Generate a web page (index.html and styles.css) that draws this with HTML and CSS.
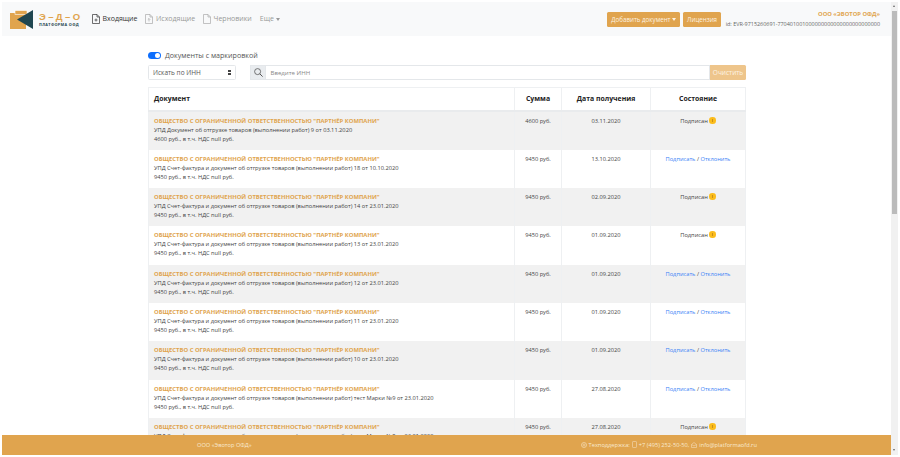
FILE: index.html
```html
<!DOCTYPE html>
<html lang="ru">
<head>
    <meta charset="UTF-8">
    <title>Э-Д-О Платформа ОФД</title>
    <link rel="stylesheet" href="styles.css">
</head>
<body>
    <div class="window">
        <div class="viewport">
            <nav class="navbar">
                <a class="brand">
                    <svg class="brand-mark" width="24" height="19" viewBox="0 0 24 19">
                        <rect x="0" y="3" width="16" height="16" fill="#e0a44e"/>
                        <rect x="5" y="0.5" width="12" height="4" fill="#e0a44e" stroke="#fff" stroke-width="0.6"/>
                        <path d="M23 0 L7 9.5 L23 19 Z" fill="#1f4650"/>
                    </svg>
                    <span class="brand-text">
                        <span class="brand-name">Э–Д–О</span>
                        <span class="brand-sub">ПЛАТФОРМА ОФД</span>
                    </span>
                </a>
                <ul class="nav-links">
                    <li class="nav-link active">
                        <svg class="doc-icon" width="8" height="10" viewBox="0 0 8 10"><path d="M.5.5H5L7.5 3V9.5H.5Z M5 .5V3H7.5 M4 4.5V7.5 M2.5 6H5.5"/></svg>
                        Входящие
                    </li>
                    <li class="nav-link">
                        <svg class="doc-icon" width="8" height="10" viewBox="0 0 8 10"><path d="M.5.5H5L7.5 3V9.5H.5Z M5 .5V3H7.5 M4 7.5V4.5 M2.8 5.7L4 4.5L5.2 5.7"/></svg>
                        Исходящие
                    </li>
                    <li class="nav-link">
                        <svg class="doc-icon" width="8" height="10" viewBox="0 0 8 10"><path d="M.5.5H5L7.5 3V9.5H.5Z M5 .5V3H7.5"/></svg>
                        Черновики
                    </li>
                    <li class="nav-link">Еще <span class="caret"></span></li>
                </ul>
                <div class="nav-actions">
                    <button class="btn">Добавить документ <span class="caret"></span></button>
                    <button class="btn">Лицензия</button>
                </div>
                <div class="org">
                    <div class="org-name">ООО «ЭВОТОР ОФД»</div>
                    <div class="org-id">id: EVR-9715260691-770401001000000000000000000000000</div>
                </div>
            </nav>

            <main class="content">
                <div class="switch-row">
                    <span class="switch"></span>
                    <span>Документы с маркировкой</span>
                </div>
                <div class="filters">
                    <div class="select">Искать по ИНН <span class="select-arrows"></span></div>
                    <div class="search">
                        <span class="search-icon">
                            <svg width="9" height="9" viewBox="0 0 9 9"><circle cx="3.6" cy="3.6" r="3" fill="none" stroke="#555" stroke-width="0.8"/><path d="M5.8 5.8L8.6 8.6" stroke="#555" stroke-width="1"/></svg>
                        </span>
                        <span class="search-input">Введите ИНН</span>
                        <button class="btn-clear">Очистить</button>
                    </div>
                </div>

                <table class="docs">
                    <thead>
                        <tr>
                            <th class="col-doc">Документ</th>
                            <th class="col-sum">Сумма</th>
                            <th class="col-date">Дата получения</th>
                            <th class="col-state">Состояние</th>
                        </tr>
                    </thead>
                    <tbody>
                        <tr>
                            <td><div class="doc-org">ОБЩЕСТВО С ОГРАНИЧЕННОЙ ОТВЕТСТВЕННОСТЬЮ "ПАРТНЁР КОМПАНИ"</div>УПД Документ об отгрузке товаров (выполнении работ) 9 от 03.11.2020<br>4600 руб., в т.ч. НДС null руб.</td>
                            <td class="center">4600 руб.</td>
                            <td class="center">03.11.2020</td>
                            <td class="center">Подписан <span class="dot"></span></td>
                        </tr>
                        <tr>
                            <td><div class="doc-org">ОБЩЕСТВО С ОГРАНИЧЕННОЙ ОТВЕТСТВЕННОСТЬЮ "ПАРТНЁР КОМПАНИ"</div>УПД Счет-фактура и документ об отгрузке товаров (выполнении работ) 18 от 10.10.2020<br>9450 руб., в т.ч. НДС null руб.</td>
                            <td class="center">9450 руб.</td>
                            <td class="center">13.10.2020</td>
                            <td class="center"><a>Подписать</a> / <a>Отклонить</a></td>
                        </tr>
                        <tr>
                            <td><div class="doc-org">ОБЩЕСТВО С ОГРАНИЧЕННОЙ ОТВЕТСТВЕННОСТЬЮ "ПАРТНЁР КОМПАНИ"</div>УПД Счет-фактура и документ об отгрузке товаров (выполнении работ) 14 от 23.01.2020<br>9450 руб., в т.ч. НДС null руб.</td>
                            <td class="center">9450 руб.</td>
                            <td class="center">02.09.2020</td>
                            <td class="center">Подписан <span class="dot"></span></td>
                        </tr>
                        <tr>
                            <td><div class="doc-org">ОБЩЕСТВО С ОГРАНИЧЕННОЙ ОТВЕТСТВЕННОСТЬЮ "ПАРТНЁР КОМПАНИ"</div>УПД Счет-фактура и документ об отгрузке товаров (выполнении работ) 13 от 23.01.2020<br>9450 руб., в т.ч. НДС null руб.</td>
                            <td class="center">9450 руб.</td>
                            <td class="center">01.09.2020</td>
                            <td class="center">Подписан <span class="dot"></span></td>
                        </tr>
                        <tr>
                            <td><div class="doc-org">ОБЩЕСТВО С ОГРАНИЧЕННОЙ ОТВЕТСТВЕННОСТЬЮ "ПАРТНЁР КОМПАНИ"</div>УПД Счет-фактура и документ об отгрузке товаров (выполнении работ) 12 от 23.01.2020<br>9450 руб., в т.ч. НДС null руб.</td>
                            <td class="center">9450 руб.</td>
                            <td class="center">01.09.2020</td>
                            <td class="center"><a>Подписать</a> / <a>Отклонить</a></td>
                        </tr>
                        <tr>
                            <td><div class="doc-org">ОБЩЕСТВО С ОГРАНИЧЕННОЙ ОТВЕТСТВЕННОСТЬЮ "ПАРТНЁР КОМПАНИ"</div>УПД Счет-фактура и документ об отгрузке товаров (выполнении работ) 11 от 23.01.2020<br>9450 руб., в т.ч. НДС null руб.</td>
                            <td class="center">9450 руб.</td>
                            <td class="center">01.09.2020</td>
                            <td class="center"><a>Подписать</a> / <a>Отклонить</a></td>
                        </tr>
                        <tr>
                            <td><div class="doc-org">ОБЩЕСТВО С ОГРАНИЧЕННОЙ ОТВЕТСТВЕННОСТЬЮ "ПАРТНЁР КОМПАНИ"</div>УПД Счет-фактура и документ об отгрузке товаров (выполнении работ) 10 от 23.01.2020<br>9450 руб., в т.ч. НДС null руб.</td>
                            <td class="center">9450 руб.</td>
                            <td class="center">01.09.2020</td>
                            <td class="center"><a>Подписать</a> / <a>Отклонить</a></td>
                        </tr>
                        <tr>
                            <td><div class="doc-org">ОБЩЕСТВО С ОГРАНИЧЕННОЙ ОТВЕТСТВЕННОСТЬЮ "ПАРТНЁР КОМПАНИ"</div>УПД Счет-фактура и документ об отгрузке товаров (выполнении работ) тест Марки №9 от 23.01.2020<br>9450 руб., в т.ч. НДС null руб.</td>
                            <td class="center">9450 руб.</td>
                            <td class="center">27.08.2020</td>
                            <td class="center"><a>Подписать</a> / <a>Отклонить</a></td>
                        </tr>
                        <tr>
                            <td><div class="doc-org">ОБЩЕСТВО С ОГРАНИЧЕННОЙ ОТВЕТСТВЕННОСТЬЮ "ПАРТНЁР КОМПАНИ"</div>УПД Счет-фактура и документ об отгрузке товаров (выполнении работ) тест Марки №8 от 23.01.2020<br>9450 руб., в т.ч. НДС null руб.</td>
                            <td class="center">9450 руб.</td>
                            <td class="center">27.08.2020</td>
                            <td class="center">Подписан <span class="dot"></span></td>
                        </tr>
                    </tbody>
                </table>
            </main>

            <footer class="footer">
                <span class="footer-org">ООО «Эвотор ОФД»</span>
                <span class="footer-contacts">
                    <svg width="6" height="6" viewBox="0 0 6 6"><circle cx="3" cy="3" r="2.5" fill="none" stroke="#f3dcb8" stroke-width="0.7"/><circle cx="3" cy="3" r="1" fill="none" stroke="#f3dcb8" stroke-width="0.6"/></svg>
                    Техподдержка:
                    <svg width="5" height="7" viewBox="0 0 5 7"><rect x="0.5" y="0.5" width="4" height="6" rx="0.6" fill="none" stroke="#f3dcb8" stroke-width="0.6"/></svg>
                    +7 (495) 252-50-50,
                    <svg width="6" height="6" viewBox="0 0 6 6"><path d="M.5 2.5L3 .5L5.5 2.5V5.5H.5Z M.5 2.5L3 4L5.5 2.5" fill="none" stroke="#f3dcb8" stroke-width="0.6"/></svg>
                    info@platformaofd.ru
                </span>
            </footer>
        </div>

        <div class="scrollbar">
            <span class="scroll-arrow up"></span>
            <span class="scroll-thumb"></span>
            <span class="scroll-arrow down"></span>
        </div>
    </div>
</body>
</html>
```

FILE: styles.css
```css
* {
    box-sizing: border-box;
}

html, body {
    height: 100%;
    margin: 0;
    background: #fff;
    overflow: hidden;
}

body {
    padding: 2px;
    font-family: 'Open Sans', 'Noto Sans', sans-serif;
    font-size: 6.5px;
    line-height: 1.5;
    color: #333;
}

.window {
    display: flex;
    height: 100%;
}

.viewport {
    position: relative;
    flex: 1;
    overflow: hidden;
}

/* navbar */
.navbar {
    display: flex;
    align-items: center;
    height: 34px;
    padding: 0 11px 0 8px;
    background: #f8f9fa;
}

.brand {
    display: flex;
    align-items: center;
    gap: 5px;
    width: 82px;
}

.brand-text {
    display: flex;
    flex-direction: column;
    color: #e0a44e;
}

.brand-name {
    font-family: 'Liberation Sans', sans-serif;
    font-size: 9.5px;
    line-height: 11px;
    font-weight: 700;
    letter-spacing: 2.4px;
}

.brand-sub {
    font-size: 3.8px;
    line-height: 5px;
    font-weight: 700;
    letter-spacing: 0.35px;
    color: #1f4650;
}

.nav-links {
    display: flex;
    gap: 8px;
    margin: 0;
    padding: 0;
    list-style: none;
    flex: 1;
}

.nav-link {
    display: flex;
    align-items: center;
    gap: 2.5px;
    font-size: 7px;
    color: #999;
}

.nav-link.active {
    color: #333;
}

.doc-icon {
    fill: none;
    stroke: #aaa;
    stroke-width: 0.7;
}

.nav-link.active .doc-icon {
    stroke: #333;
}

.caret {
    display: inline-block;
    width: 0;
    height: 0;
    border-top: 3px solid currentColor;
    border-left: 2.5px solid transparent;
    border-right: 2.5px solid transparent;
    vertical-align: middle;
}

.nav-actions {
    display: flex;
    gap: 3px;
    margin-right: 4px;
}

.btn {
    height: 15px;
    padding: 0 4px;
    border: 0;
    border-radius: 1.5px;
    background: #e0a44e;
    color: #fdf3e3;
    font-family: inherit;
    font-size: 6.2px;
}

.org {
    text-align: right;
    line-height: 10px;
    width: 155px;
}

.org-name {
    color: #e0a44e;
    font-weight: 700;
    font-size: 5.8px;
}

.org-id {
    color: #666;
    white-space: nowrap;
    font-size: 5.45px;
}

/* filters */
.content {
    width: 598px;
    margin-left: 146px;
    padding-top: 13px;
}

.switch-row {
    display: flex;
    align-items: center;
    gap: 4px;
    height: 13px;
    font-size: 7.1px;
    color: #555;
}

.switch {
    position: relative;
    width: 13px;
    height: 7px;
    border-radius: 4px;
    background: #0d6efd;
}

.switch::after {
    content: '';
    position: absolute;
    top: 1px;
    right: 1px;
    width: 5px;
    height: 5px;
    border-radius: 50%;
    background: #fff;
}

.filters {
    display: flex;
    gap: 14px;
    margin-top: 3px;
    height: 15px;
}

.select {
    display: flex;
    align-items: center;
    justify-content: space-between;
    width: 88px;
    padding: 0 4px;
    border: 1px solid #e4e7ea;
    border-radius: 1.5px;
    background: #fff;
    color: #555;
}

.select-arrows {
    width: 3px;
    height: 5px;
    background: linear-gradient(#444 40%, transparent 40%, transparent 60%, #444 60%);
}

.search {
    display: flex;
    flex: 1;
}

.search-icon {
    display: flex;
    align-items: center;
    justify-content: center;
    width: 16px;
    background: #e9ecef;
    border: 1px solid #e4e7ea;
}

.search-input {
    display: flex;
    align-items: center;
    flex: 1;
    padding-left: 4.5px;
    border: 1px solid #e4e7ea;
    border-left: 0;
    color: #888;
    font-size: 6.1px;
}

.btn-clear {
    width: 36px;
    padding: 0;
    border: 0;
    border-radius: 0 1.5px 1.5px 0;
    background: #eec58b;
    color: #fdf3e3;
    font-family: inherit;
    font-size: 6.5px;
}

/* table */
.docs {
    width: 598px;
    margin-top: 7px;
    border-collapse: collapse;
    table-layout: fixed;
    border: 1px solid #eef0f2;
}

.docs th {
    height: 23px;
    padding: 0 5px;
    border-left: 1px solid #eef0f2;
    border-bottom: 2px solid #e9ebed;
    font-size: 6.9px;
    color: #222;
    text-align: center;
    vertical-align: middle;
}

.docs th.col-doc {
    text-align: left;
}

.col-doc {
    width: 366px;
}

.col-sum {
    width: 47px;
}

.col-date {
    width: 89px;
}

.docs td {
    height: 38px;
    padding: 5px 5px 0;
    border-left: 1px solid #eef0f2;
    vertical-align: top;
    font-size: 5.7px;
    line-height: 9px;
    color: #444;
}

.docs tbody tr:nth-child(3n+1) td {
    height: 39px;
}

.docs tbody tr:nth-child(odd) {
    background: #f1f1f1;
}

.docs td.center {
    text-align: center;
}

.doc-org {
    color: #e0a44e;
    font-weight: 700;
    font-size: 5.9px;
}

.docs a {
    color: #3b82f6;
}

.dot {
    display: inline-block;
    width: 6.5px;
    height: 6.5px;
    border-radius: 50%;
    background: #fbbc1c;
    vertical-align: -1px;
    text-align: center;
}

.dot::after {
    content: '';
    display: block;
    width: 1px;
    height: 3.5px;
    margin: 1.5px auto 0;
    background: #c8901a;
}

/* footer */
.footer {
    position: absolute;
    left: 0;
    right: 0;
    bottom: 0;
    display: flex;
    align-items: center;
    height: 20px;
    padding-left: 195px;
    background: #e0a44e;
    color: #f8e9d0;
    font-size: 5.7px;
}

.footer-contacts {
    display: flex;
    align-items: center;
    gap: 2px;
    margin-left: 329px;
}

/* scrollbar */
.scrollbar {
    display: flex;
    flex-direction: column;
    width: 7px;
    background: #f1f1f1;
}

.scroll-arrow {
    height: 9px;
    flex: none;
    position: relative;
}

.scroll-arrow::after {
    content: '';
    position: absolute;
    left: 2px;
    top: 3px;
    border-left: 1.5px solid transparent;
    border-right: 1.5px solid transparent;
}

.scroll-arrow.up::after {
    border-bottom: 2px solid #666;
}

.scroll-arrow.down::after {
    border-top: 2px solid #666;
}

.scroll-thumb {
    height: 203px;
    margin: 0 1px auto;
    background: #bbb;
}
```
